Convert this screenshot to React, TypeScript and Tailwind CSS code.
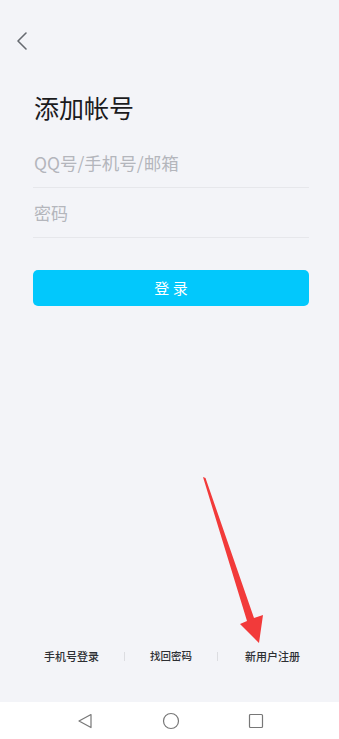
import React from 'react';

const font = { fontFamily: '"Noto Sans CJK SC", "Noto Sans", sans-serif' };

export default function App() {
  return (
    <div
      className="relative flex h-[739px] w-full flex-col overflow-hidden bg-[#f3f4f8]"
      style={font}
    >
      {/* back */}
      <div className="px-[15px] pt-[31px]">
        <svg width="14" height="20" viewBox="0 0 14 20" fill="none">
          <path d="M11 2 L3 10 L11 18" stroke="#666a70" strokeWidth="1.6" strokeLinecap="round" strokeLinejoin="round" />
        </svg>
      </div>

      <h1 className="mt-[40px] px-[34px] text-[25px] leading-[32px] font-normal text-[#1b1b1d]">添加帐号</h1>

      <div className="ml-[33px] mr-[30px] mt-[16px] flex h-[49px] items-center border-b border-[#e6e7eb]">
        <input
          className="w-full bg-transparent px-[1px] text-[17.5px] text-[#222] outline-none placeholder:text-[#b4b6bc]"
          placeholder="QQ号/手机号/邮箱"
        />
      </div>
      <div className="ml-[33px] mr-[30px] flex h-[50px] items-center border-b border-[#e6e7eb]">
        <input
          type="password"
          className="w-full bg-transparent px-[1px] text-[17px] text-[#222] outline-none placeholder:text-[#b4b6bc]"
          placeholder="密码"
        />
      </div>

      <button className="ml-[33px] mr-[30px] mt-[32px] h-[36px] rounded-[5px] bg-[#02c8fc] text-[15px] text-white">
        登 录
      </button>

      <div className="flex-1" />

      <div className="flex items-center gap-[25px] pb-[36px] pl-[44px] text-[11px] leading-[20px] font-medium text-[#2d2f33]">
        <span>手机号登录</span>
        <span className="h-[9px] w-px bg-[#dcdde1]" />
        <span className="text-[10.5px]">找回密码</span>
        <span className="h-[9px] w-px bg-[#dcdde1]" />
        <span className="ml-[2px]">新用户注册</span>
      </div>

      {/* system nav bar */}
      <div className="flex h-[37px] items-center justify-between bg-white pl-[77px] pr-[75px]">
        <svg width="16" height="16" viewBox="0 0 16 16" fill="none">
          <path d="M14 1.5 L2 8 L14 14.5 Z" stroke="#777" strokeWidth="1.2" strokeLinejoin="round" />
        </svg>
        <svg width="18" height="18" viewBox="0 0 18 18" fill="none">
          <circle cx="9" cy="9" r="7.5" stroke="#777" strokeWidth="1.2" />
        </svg>
        <svg width="16" height="16" viewBox="0 0 16 16" fill="none">
          <rect x="1.5" y="1.5" width="13" height="13" rx="1" stroke="#777" strokeWidth="1.2" />
        </svg>
      </div>

      {/* red annotation arrow */}
      <svg
        className="pointer-events-none absolute left-0 top-0"
        width="339"
        height="739"
        viewBox="0 0 339 739"
      >
        <polygon
          points="203,477 205.5,478 254,618 263,615 259,643 240,624 247,621"
          fill="#f23a3a"
        />
      </svg>
    </div>
  );
}
